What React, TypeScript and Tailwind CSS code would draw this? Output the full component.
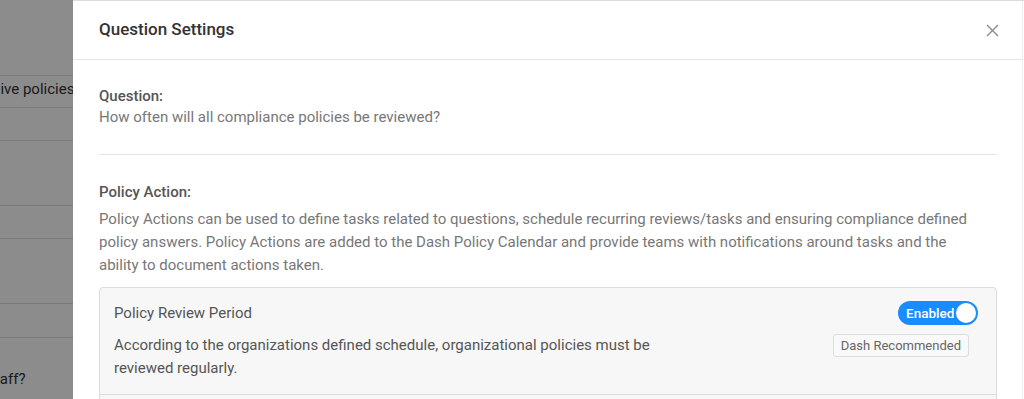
const font = { fontFamily: 'Roboto, "Liberation Sans", sans-serif' };

const BackgroundPage = () => {
  return (
    <div className="flex h-full w-full flex-col bg-white text-[15px] text-[#333]">
      <div className="h-[76px] shrink-0 border-b border-[#ddd]" />
      <div className="flex h-[32px] shrink-0 items-center border-b border-[#ddd] pb-[4px]">
        <span className="-ml-[41px] whitespace-nowrap">Sensitive policies</span>
      </div>
      <div className="h-[33px] shrink-0 border-b border-[#ddd]" />
      <div className="h-[65px] shrink-0 border-b border-[#ddd]" />
      <div className="h-[33px] shrink-0 border-b border-[#ddd]" />
      <div className="h-[65px] shrink-0 border-b border-[#ddd]" />
      <div className="h-[34px] shrink-0 border-b border-[#ddd]" />
      <div className="flex h-[60px] shrink-0 items-end pb-[8px]">
        <span className="-ml-[14px] whitespace-nowrap">Staff?</span>
      </div>
    </div>
  );
};

const Toggle = () => {
  return (
    <div className="flex h-[24px] w-[80px] items-center justify-between rounded-full bg-[#1a8cff] pl-[8px] pr-[2px]">
      <span className="text-[13.5px] font-medium text-white">Enabled</span>
      <span className="h-[20px] w-[20px] rounded-full bg-white" />
    </div>
  );
};

const CloseIcon = () => (
  <svg width="13" height="13" viewBox="0 0 13 13" fill="none">
    <path d="M1 1L12 12M12 1L1 12" stroke="#8a8a8a" strokeWidth="1.4" />
  </svg>
);

export default function App() {
  return (
    <div className="relative h-[399px] w-[1024px] overflow-hidden" style={font}>
      <BackgroundPage />
      <div className="absolute inset-0 bg-black/45" />

      <div className="absolute bottom-0 left-[73px] right-0 top-0 flex border-t border-[#dcdcdc] bg-white">
        <div className="flex flex-1 flex-col border-r border-[#eee]">
          <div className="flex h-[59px] shrink-0 items-center justify-between border-b border-[#e6e6e6] pl-[26px] pr-[23px]">
            <h2 className="text-[17px] font-medium text-[#333]">Question Settings</h2>
            <CloseIcon />
          </div>

          <div className="flex flex-col pl-[26px] pr-[25px] pt-[26px] text-[15px] leading-[21px]">
            <div className="font-medium text-[#555]">Question:</div>
            <div className="text-[#777]">How often will all compliance policies be reviewed?</div>

            <div className="mt-[26px] border-t border-[#e6e6e6]" />

            <div className="mt-[27px] font-medium text-[#555]">Policy Action:</div>
            <p className="mt-[5px] w-[885px] leading-[23px] text-[#777]">
              Policy Actions can be used to define tasks related to questions, schedule recurring
              reviews/tasks and ensuring compliance defined policy answers. Policy Actions are added
              to the Dash Policy Calendar and provide teams with notifications around tasks and the
              ability to document actions taken.
            </p>

            <div className="mt-[10px] rounded-[4px] border border-[#ddd] bg-[#f7f7f7]">
              <div className="flex items-center justify-between pl-[14px] pr-[18px] pt-[13px]">
                <span className="text-[#555]">Policy Review Period</span>
                <Toggle />
              </div>
              <div className="mt-[9px] flex justify-between pb-[14px] pl-[14px] pr-[27px]">
                <p className="w-[570px] leading-[23px] text-[#555]">
                  According to the organizations defined schedule, organizational policies must be
                  reviewed regularly.
                </p>
                <span className="h-[23px] self-start rounded-[3px] border border-[#ddd] bg-[#f9f9f9] px-[7px] text-[13px] leading-[21px] text-[#666]">
                  Dash Recommended
                </span>
              </div>
              <div className="h-[40px] border-t border-[#ddd]" />
            </div>
          </div>
        </div>
        <div className="w-[1px] shrink-0" />
      </div>
    </div>
  );
}
